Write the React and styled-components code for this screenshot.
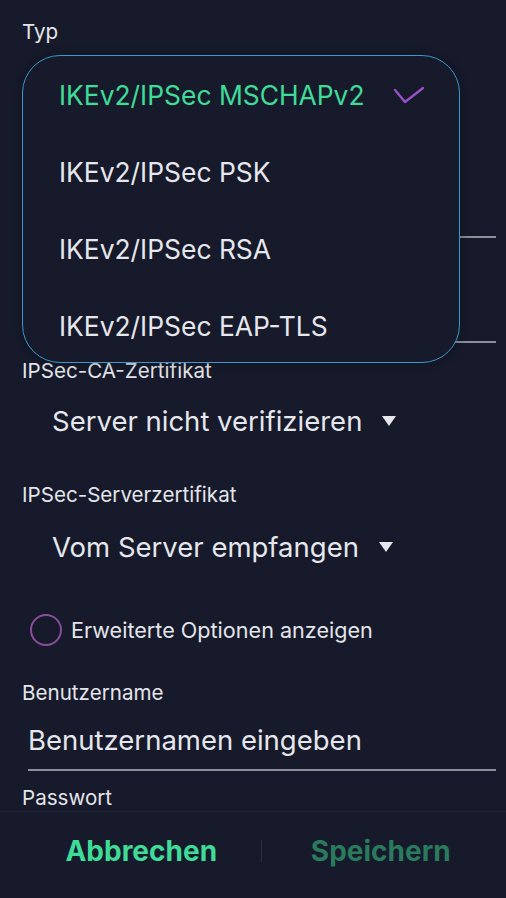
import React from "react";
import styled, { createGlobalStyle } from "styled-components";

const GlobalStyle = createGlobalStyle`
  html, body {
    margin: 0;
    padding: 0;
    background: #161a2b;
  }
  body {
    font-family: Inter, "Noto Sans", sans-serif;
    color: #e4e5ea;
  }
`;

const Screen = styled.div`
  width: 506px;
  height: 898px;
  display: flex;
  flex-direction: column;
  background: #161a2b;
  overflow: hidden;
  position: relative;
`;

const Form = styled.div`
  flex: 1;
  padding: 20px 10px 0 22px;
  display: flex;
  flex-direction: column;
  overflow: hidden;
`;

const Label = styled.div`
  font-size: 20.6px;
  line-height: 24px;
  color: #e4e5ea;
  margin-top: ${(p) => p.$top || 0}px;
`;

const SelectRow = styled.div`
  height: ${(p) => p.$height || 76}px;
  display: flex;
  align-items: center;
  gap: 20px;
  padding-left: 30px;
  font-size: 27.5px;
  color: #e6e7ec;
`;

const Caret = styled.span`
  width: 0;
  height: 0;
  border-left: 7px solid transparent;
  border-right: 7px solid transparent;
  border-top: 10px solid #e6e7ec;
`;

const InputRow = styled.div`
  height: ${(p) => p.$height || 66}px;
  margin-left: 6px;
  display: flex;
  align-items: flex-end;
  padding-bottom: 12px;
  box-sizing: border-box;
  border-bottom: 2px solid #8d8f99;
  font-size: 27.5px;
  color: #e6e7ec;
`;

const HiddenField = styled.div`
  height: ${(p) => p.$height}px;
  border-bottom: 2px solid #8d8f99;
  margin-left: 6px;
  box-sizing: border-box;
`;

const Spacer = styled.div`
  height: ${(p) => p.$height}px;
`;

const RadioRow = styled.label`
  height: 46px;
  margin-top: 20px;
  display: flex;
  align-items: center;
  gap: 9px;
  padding-left: 8px;
  font-size: 21.6px;
  color: #e4e5ea;
`;

const Radio = styled.span`
  width: 28px;
  height: 28px;
  border-radius: 50%;
  border: 2px solid #8a4f9c;
`;

const Popup = styled.ul`
  position: absolute;
  top: 55px;
  left: 22px;
  width: 438px;
  height: 308px;
  box-sizing: border-box;
  margin: 0;
  padding: 0;
  list-style: none;
  background: #161a2b;
  border: 1.5px solid #3b98cc;
  border-radius: 38px;
  box-shadow: 0 0 12px rgba(0, 0, 0, 0.35);
`;

const Option = styled.li`
  height: 77px;
  display: flex;
  align-items: center;
  justify-content: space-between;
  padding: 0 34px 0 36px;
  font-size: 26.4px;
  color: ${(p) => (p.$active ? "#3fdc98" : "#e6e7ec")};
`;

const Bar = styled.div`
  height: 87px;
  flex-shrink: 0;
  box-sizing: border-box;
  border-top: 1px solid #1e2233;
  padding: 0 6px 8px 22px;
  display: flex;
  align-items: center;
`;

const BarButton = styled.button`
  flex: 1;
  background: none;
  border: none;
  font-family: inherit;
  font-size: 28px;
  font-weight: 700;
  padding: 0;
  color: ${(p) => (p.$disabled ? "#2a7a5e" : "#3fdc98")};
`;

const BarDivider = styled.span`
  width: 1px;
  height: 22px;
  background: #2a2e3f;
`;

const Check = () => (
  <svg width="32" height="22" viewBox="0 0 32 22" fill="none">
    <path d="M2 6 L12 18 L30 4" stroke="#9a50c8" strokeWidth="2.4" strokeLinecap="round" strokeLinejoin="round" />
  </svg>
);

const types = [
  "IKEv2/IPSec MSCHAPv2",
  "IKEv2/IPSec PSK",
  "IKEv2/IPSec RSA",
  "IKEv2/IPSec EAP-TLS",
];

export default function App() {
  return (
    <Screen>
      <GlobalStyle />
      <Form>
        <Label>Typ</Label>
        <Spacer $height={88} />
        <HiddenField $height={106} />
        <HiddenField $height={105} />
        <Label $top={16}>IPSec-CA-Zertifikat</Label>
        <SelectRow>
          Server nicht verifizieren <Caret />
        </SelectRow>
        <Label $top={24}>IPSec-Serverzertifikat</Label>
        <SelectRow $height={80}>
          Vom Server empfangen <Caret />
        </SelectRow>
        <RadioRow>
          <Radio />
          Erweiterte Optionen anzeigen
        </RadioRow>
        <Label $top={28}>Benutzername</Label>
        <InputRow>Benutzernamen eingeben</InputRow>
        <Label $top={15}>Passwort</Label>
      </Form>
      <Bar>
        <BarButton>Abbrechen</BarButton>
        <BarDivider />
        <BarButton $disabled>Speichern</BarButton>
      </Bar>
      <Popup>
        {types.map((t, i) => (
          <Option key={t} $active={i === 0}>
            {t}
            {i === 0 && <Check />}
          </Option>
        ))}
      </Popup>
    </Screen>
  );
}
